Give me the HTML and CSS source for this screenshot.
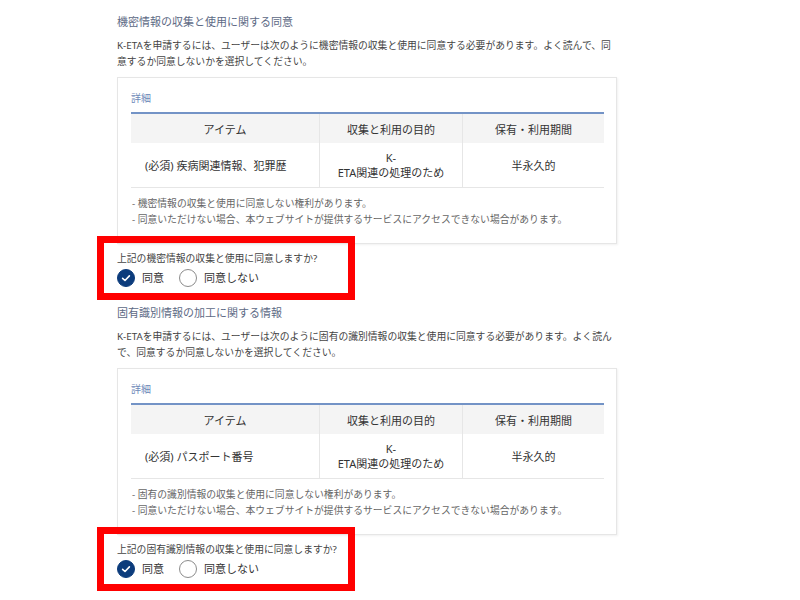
FILE: index.html
```html
<!DOCTYPE html>
<html lang="ja">
<head>
    <meta charset="UTF-8">
    <link rel="stylesheet" href="styles.css">
</head>
<body>
    <div class="page">
        <div class="consent">
            <h3 class="consent-title">機密情報の収集と使用に関する同意</h3>
            <p class="consent-desc">K-ETAを申請するには、ユーザーは次のように機密情報の収集と使用に同意する必要があります。よく読んで、同意するか同意しないかを選択してください。</p>
            <div class="detail-box">
                <div class="detail-label">詳細</div>
                <table class="detail-table">
                    <thead>
                        <tr><th class="col-item">アイテム</th><th class="col-purpose">収集と利用の目的</th><th>保有・利用期間</th></tr>
                    </thead>
                    <tbody>
                        <tr><td class="item">(必須) 疾病関連情報、犯罪歴</td><td class="purpose">K-ETA関連の処理のため</td><td>半永久的</td></tr>
                    </tbody>
                </table>
                <ul class="notes">
                    <li>- 機密情報の収集と使用に同意しない権利があります。</li>
                    <li>- 同意いただけない場合、本ウェブサイトが提供するサービスにアクセスできない場合があります。</li>
                </ul>
            </div>
            <div class="question">
                <p>上記の機密情報の収集と使用に同意しますか?</p>
                <div class="choices">
                    <label class="choice"><span class="radio checked"><svg viewBox="0 0 18 18" width="18" height="18"><path d="M5.6 9.3 L8 11.5 L12.4 6.9" fill="none" stroke="#fff" stroke-width="1.6" stroke-linecap="round" stroke-linejoin="round"/></svg></span>同意</label>
                    <label class="choice"><span class="radio"></span>同意しない</label>
                </div>
                <div class="highlight"></div>
            </div>
        </div>

        <div class="consent">
            <h3 class="consent-title">固有識別情報の加工に関する情報</h3>
            <p class="consent-desc">K-ETAを申請するには、ユーザーは次のように固有の識別情報の収集と使用に同意する必要があります。よく読んで、同意するか同意しないかを選択してください。</p>
            <div class="detail-box">
                <div class="detail-label">詳細</div>
                <table class="detail-table">
                    <thead>
                        <tr><th class="col-item">アイテム</th><th class="col-purpose">収集と利用の目的</th><th>保有・利用期間</th></tr>
                    </thead>
                    <tbody>
                        <tr><td class="item">(必須) パスポート番号</td><td class="purpose">K-ETA関連の処理のため</td><td>半永久的</td></tr>
                    </tbody>
                </table>
                <ul class="notes">
                    <li>- 固有の識別情報の収集と使用に同意しない権利があります。</li>
                    <li>- 同意いただけない場合、本ウェブサイトが提供するサービスにアクセスできない場合があります。</li>
                </ul>
            </div>
            <div class="question">
                <p>上記の固有識別情報の収集と使用に同意しますか?</p>
                <div class="choices">
                    <label class="choice"><span class="radio checked"><svg viewBox="0 0 18 18" width="18" height="18"><path d="M5.6 9.3 L8 11.5 L12.4 6.9" fill="none" stroke="#fff" stroke-width="1.6" stroke-linecap="round" stroke-linejoin="round"/></svg></span>同意</label>
                    <label class="choice"><span class="radio"></span>同意しない</label>
                </div>
                <div class="highlight"></div>
            </div>
        </div>
    </div>
</body>
</html>
```

FILE: styles.css
```css
body {
    margin: 0;
    padding: 0;
    background-color: #fff;
    color: #333;
    font-family: "Noto Sans", "Noto Sans CJK JP", sans-serif;
}
div.page {
    width: 500px;
    padding: 14px 0 0 117px;
}
div.consent {
    margin-bottom: 17px;
}
h3.consent-title {
    margin: 0;
    color: #5d6a85;
    font-size: 11px;
    font-weight: normal;
    line-height: 16px;
}
p.consent-desc {
    margin: 8px 0 0;
    color: #444;
    font-size: 9.8px;
    line-height: 16px;
}
div.detail-box {
    box-sizing: border-box;
    width: 500px;
    margin-top: 7px;
    border: 1px solid #e6e6e6;
    box-shadow: 1px 1px 2px rgba(0, 0, 0, 0.06);
    padding: 12px 12px 15px 13px;
}
div.detail-label {
    color: #6d88b8;
    font-size: 10px;
    line-height: 16px;
}
table.detail-table {
    width: 100%;
    margin-top: 6px;
    border-collapse: collapse;
    border-top: 2px solid #7393c6;
    font-size: 11px;
    color: #333;
}
table.detail-table th {
    height: 29px;
    padding: 0;
    background-color: #f4f4f4;
    font-weight: normal;
    text-align: center;
    border-left: 1px solid #e6e6e6;
}
table.detail-table td {
    height: 44px;
    padding: 0 8px;
    line-height: 15px;
    text-align: center;
    word-break: keep-all;
    border-left: 1px solid #e6e6e6;
    border-bottom: 1px solid #e6e6e6;
}
table.detail-table th:first-child,
table.detail-table td:first-child {
    border-left: none;
}
table.detail-table th.col-item {
    width: 188px;
}
table.detail-table th.col-purpose {
    width: 142px;
}
table.detail-table td.item {
    text-align: left;
    padding-left: 14px;
}
table.detail-table td.purpose {
    padding: 0 16px;
}
ul.notes {
    list-style: none;
    margin: 8px 0 0;
    padding: 0 0 0 1px;
    color: #666;
    font-size: 9.8px;
    line-height: 16px;
}
div.question {
    position: relative;
    margin-top: 7px;
}
div.question p {
    margin: 0;
    color: #444;
    font-size: 9.8px;
    line-height: 16px;
}
div.choices {
    display: flex;
    align-items: center;
    height: 20px;
    margin-top: 1px;
}
label.choice {
    display: flex;
    align-items: center;
    gap: 7px;
    margin-right: 15px;
    color: #333;
    font-size: 11px;
    line-height: 20px;
}
span.radio {
    box-sizing: border-box;
    display: inline-block;
    width: 18px;
    height: 18px;
    border: 1px solid #8c8c8c;
    border-radius: 50%;
    background-color: #fff;
}
span.radio.checked {
    border-color: #0c3c7c;
    background-color: #0c3c7c;
}
span.radio svg {
    display: block;
    margin: -1px;
}
div.highlight {
    position: absolute;
    left: -20px;
    top: -15px;
    box-sizing: border-box;
    width: 258px;
    height: 64px;
    border: 7px solid #ff0000;
    pointer-events: none;
}
```
